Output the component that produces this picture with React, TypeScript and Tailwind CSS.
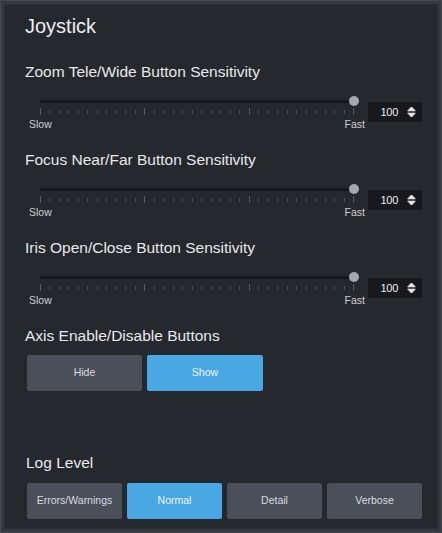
import React from "react";

const font = { fontFamily: '"Liberation Sans", Arial, sans-serif' };

function SpinIcon() {
  return (
    <svg width="9" height="12" viewBox="0 0 9 12" className="block">
      <path d="M0.8 4.8 L4.5 1 L8.2 4.8 Z" fill="#e8eaee" stroke="#e8eaee" strokeWidth="1" strokeLinejoin="round" />
      <path d="M0.8 7.2 L4.5 11 L8.2 7.2 Z" fill="#e8eaee" stroke="#e8eaee" strokeWidth="1" strokeLinejoin="round" />
    </svg>
  );
}

function Slider() {
  const ticks = Array.from({ length: 34 }, (_, i) => i);
  return (
    <div className="flex items-start">
      <div className="w-[341px]">
        <div className="ml-[13px] w-[314px]">
          <div className="relative h-[12px] flex items-center">
            <div className="h-[3px] w-full rounded-full bg-[#15171a]" />
            <div className="absolute right-[-5px] top-[1px] h-[10px] w-[10px] rounded-full bg-[#a3a8b0]" />
          </div>
          <div className="mt-[1px] h-[7px] flex items-center justify-between">
            {ticks.map((i) =>
              i % 11 === 0 ? (
                <div key={i} className="h-[7px] w-px bg-[#565a62]" />
              ) : (
                <div key={i} className="h-[4px] w-px bg-[#4a4e55]" />
              )
            )}
          </div>
          <div className="-mx-[11px] mt-[3px] flex justify-between text-[10.5px] leading-[12px] text-[#cdd1d7]">
            <span>Slow</span>
            <span>Fast</span>
          </div>
        </div>
      </div>
      <div className="mt-[7px] flex h-[20px] w-[54px] items-center justify-end gap-[9px] bg-[#17191c] pr-[6px] text-[11px] tracking-[-0.3px] text-[#eceef1]">
        <span>100</span>
        <SpinIcon />
      </div>
    </div>
  );
}

function Section({ label, last }: { label: string; last?: boolean }) {
  return (
    <div className={last ? "" : "mb-[20px]"}>
      <div className="-ml-[2px] text-[15.5px] leading-[20px] text-[#e6e8eb]">{label}</div>
      <div className="mt-[13px]">
        <Slider />
      </div>
    </div>
  );
}

function Btn({ children, active, w }: { children: React.ReactNode; active?: boolean; w: string }) {
  return (
    <div
      className={
        "flex h-[36px] items-center justify-center rounded-[2px] text-[10.5px] " +
        w +
        " " +
        (active ? "bg-[#49a7e3] text-[#eef6fc]" : "bg-[#4a4f59] text-[#d9dce0]")
      }
    >
      {children}
    </div>
  );
}

export default function App() {
  return (
    <div style={font} className="h-[533px] w-[442px] border border-[#45484d] bg-[#35383d] p-[3px]">
      <div className="h-full w-full border border-[#2a2d32] bg-[#25282d] pl-[22px] pr-[15px] pt-[7px]">
        <div className="-ml-[2px] text-[20px] leading-[28px] text-[#eceef0]">Joystick</div>
        <div className="mt-[22px]">
          <Section label="Zoom Tele/Wide Button Sensitivity" />
          <Section label="Focus Near/Far Button Sensitivity" />
          <Section label="Iris Open/Close Button Sensitivity" />
        </div>
        <div className="-ml-[2px] text-[15.5px] leading-[20px] text-[#e6e8eb]">Axis Enable/Disable Buttons</div>
        <div className="mt-[9px] flex gap-[5px]">
          <Btn w="w-[115px]">Hide</Btn>
          <Btn w="w-[116px]" active>
            Show
          </Btn>
        </div>
        <div className="mt-[62px] -ml-[1px] text-[15.5px] leading-[20px] text-[#e6e8eb]">Log Level</div>
        <div className="mt-[10px] flex gap-[5px]">
          <Btn w="w-[95px]">Errors/Warnings</Btn>
          <Btn w="w-[95px]" active>
            Normal
          </Btn>
          <Btn w="w-[95px]">Detail</Btn>
          <Btn w="w-[95px]">Verbose</Btn>
        </div>
      </div>
    </div>
  );
}
